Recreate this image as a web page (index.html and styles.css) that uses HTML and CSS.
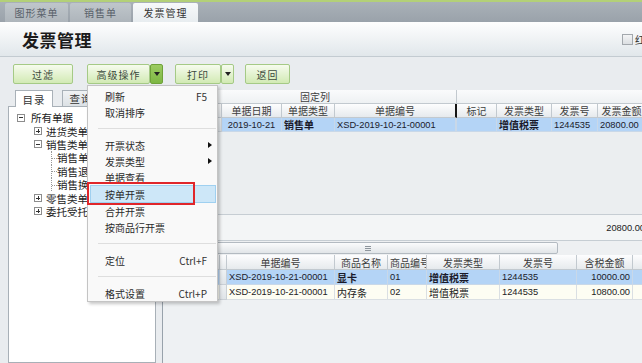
FILE: index.html
```html
<!DOCTYPE html>
<html lang="zh-CN">
<head>
<meta charset="utf-8">
<title>发票管理</title>
<link rel="stylesheet" href="styles.css">
</head>
<body>
<div class="app">
  <div class="tabbar">
    <div class="tab t1">图形菜单</div>
    <div class="tab t2">销售单</div>
    <div class="tab t3 active">发票管理</div>
  </div>
  <div class="titlebar">
    <h1 class="title">发票管理</h1>
    <label class="chk"><span class="box"></span>红字发票</label>
  </div>
  <div class="toolbar">
    <button class="btn b-filter">过滤</button>
    <div class="split s-adv"><button class="btn b-adv">高级操作</button><button class="drop pressed"><i class="tri"></i></button></div>
    <div class="split s-print"><button class="btn b-print">打印</button><button class="drop"><i class="tri"></i></button></div>
    <button class="btn b-back">返回</button>
  </div>
  <div class="content">
    <div class="leftpanel">
      <div class="ltabs">
        <div class="ltab active">目录</div>
        <div class="ltab">查询</div>
      </div>
      <div class="tree">
        <div class="node l0"><span class="exp"></span>所有单据</div>
        <div class="node l1"><span class="exp plus"></span>进货类单据</div>
        <div class="node l1"><span class="exp"></span>销售类单据</div>
        <div class="node l2"><span class="dash"></span>销售单</div>
        <div class="node l2"><span class="dash"></span>销售退货单</div>
        <div class="node l2"><span class="dash"></span>销售换货单</div>
        <div class="node l1"><span class="exp plus"></span>零售类单据</div>
        <div class="node l1"><span class="exp plus"></span>委托受托单据</div>
      </div>
    </div>
    <div class="rightpanel">
      <div class="tgrid">
        <div class="c hd grp"></div>
        <div class="c hd grp s4">固定列</div>
        <div class="c hd grp s4 last"></div>

        <div class="c hd"></div>
        <div class="c hd">序号</div>
        <div class="c hd">单据日期</div>
        <div class="c hd">单据类型</div>
        <div class="c hd thick">单据编号</div>
        <div class="c hd">标记</div>
        <div class="c hd">发票类型</div>
        <div class="c hd">发票号</div>
        <div class="c hd">发票金额</div>

        <div class="c ind"></div>
        <div class="c ind"></div>
        <div class="c sel ctr"><span class="n">2019-10-21</span></div>
        <div class="c sel b">销售单</div>
        <div class="c sel thick"><span class="n">XSD-2019-10-21-00001</span></div>
        <div class="c sel"></div>
        <div class="c sel b">增值税票</div>
        <div class="c sel"><span class="n">1244535</span></div>
        <div class="c sel"><span class="n">20800.00</span></div>
      </div>
      <div class="gbody"></div>
      <div class="summary"><span class="n">20800.00</span></div>
      <div class="hscroll"><div class="thumb"><span class="grip"></span></div></div>
      <div class="bgrid">
        <div class="c hd"></div>
        <div class="c hd"></div>
        <div class="c hd">单据编号</div>
        <div class="c hd">商品名称</div>
        <div class="c hd lft">商品编号</div>
        <div class="c hd">发票类型</div>
        <div class="c hd">发票号</div>
        <div class="c hd">含税金额</div>
        <div class="c hd"></div>

        <div class="c sel"></div>
        <div class="c ind"></div>
        <div class="c sel"><span class="n">XSD-2019-10-21-00001</span></div>
        <div class="c sel b">显卡</div>
        <div class="c sel"><span class="n">01</span></div>
        <div class="c sel b">增值税票</div>
        <div class="c sel"><span class="n">1244535</span></div>
        <div class="c sel r"><span class="n">10000.00</span></div>
        <div class="c sel"></div>

        <div class="c alt"></div>
        <div class="c ind"></div>
        <div class="c alt"><span class="n">XSD-2019-10-21-00001</span></div>
        <div class="c alt">内存条</div>
        <div class="c alt"><span class="n">02</span></div>
        <div class="c alt">增值税票</div>
        <div class="c alt"><span class="n">1244535</span></div>
        <div class="c alt r"><span class="n">10800.00</span></div>
        <div class="c alt"></div>
      </div>
    </div>
  </div>

  <div class="menu">
    <div class="mi"><span>刷新</span><span class="sc">F5</span></div>
    <div class="mi"><span>取消排序</span></div>
    <div class="sep"></div>
    <div class="mi"><span>开票状态</span><i class="arrow"></i></div>
    <div class="mi"><span>发票类型</span><i class="arrow"></i></div>
    <div class="mi"><span>单据查看</span></div>
    <div class="mi hl"><span>按单开票</span></div>
    <div class="mi"><span>合并开票</span></div>
    <div class="mi"><span>按商品行开票</span></div>
    <div class="sep"></div>
    <div class="mi"><span>定位</span><span class="sc">Ctrl+F</span></div>
    <div class="sep"></div>
    <div class="mi"><span>格式设置</span><span class="sc">Ctrl+P</span></div>
  </div>
  <div class="redbox"></div>
</div>
</body>
</html>
```

FILE: styles.css
```css
* { box-sizing: border-box; margin: 0; padding: 0; }
html, body { width: 642px; height: 363px; overflow: hidden; }
body {
  font-family: "Noto Sans CJK SC", "Noto Sans", sans-serif;
  font-size: 10px;
  color: #222;
  background: #e9ecef;
}
.app { position: relative; width: 642px; height: 363px; display: flex; flex-direction: column; overflow: hidden; }

/* top tab strip */
.tabbar {
  height: 22px; flex: none; display: flex; align-items: flex-end; gap: 2px;
  padding-left: 5px;
  background: linear-gradient(#a9b1b8, #9aa2aa);
  border-top: 2px solid #b3d078;
}
.tab {
  height: 19px; display: flex; align-items: center; justify-content: center;
  background: linear-gradient(#bfc6cb, #aeb5bb);
  color: #59616a; font-size: 10px; letter-spacing: 1px;
  border-radius: 2px 2px 0 0;
}
.t1 { width: 63px; }
.t2 { width: 61px; }
.t3 { width: 65px; }
.tab.active { background: linear-gradient(#f7f9fa, #e8edf0); color: #333; }

/* title */
.titlebar {
  height: 35px; flex: none; display: flex; align-items: center; padding-left: 22px;
  background: linear-gradient(#fefefe, #e1e7eb);
  border-bottom: 1px solid #c3cbd1;
}
.title { flex: 1; font-size: 17px; font-weight: bold; color: #1c1c1c; letter-spacing: 0.5px; }
.chk { width: 20px; display: flex; align-items: center; gap: 2px; overflow: hidden; white-space: nowrap; font-size: 10px; color: #333; }
.box { width: 11px; height: 11px; flex: none; border: 1px solid #a3a8ad; background: linear-gradient(#f3f4f5, #dcdfe2); }

/* toolbar */
.toolbar { height: 33px; flex: none; display: flex; align-items: flex-start; padding: 7px 0 0 13px; }
.btn, .drop {
  height: 20px; border: 1px solid #a5ca86; border-radius: 2px;
  background: linear-gradient(#f6fbee, #d2eab4);
  font-family: "Noto Sans CJK SC", sans-serif; font-size: 10px; letter-spacing: 1px; color: #3b4a3c;
  display: flex; align-items: center; justify-content: center;
}
.split { display: flex; }
.b-filter { width: 60px; }
.s-adv { margin-left: 14px; }
.b-adv { width: 63px; }
.s-print { margin-left: 12px; }
.b-print { width: 46px; }
.b-back { width: 45px; margin-left: 11px; }
.drop { width: 13px; letter-spacing: 0; }
.drop.pressed { background: linear-gradient(#9ccb62, #7db743); border-color: #6fa23a; }
.tri { width: 0; height: 0; border-top: 4px solid #222; border-left: 3px solid transparent; border-right: 3px solid transparent; }

/* content */
.content { flex: 1; display: flex; min-height: 0; }
.leftpanel { width: 148px; flex: none; margin-left: 8px; display: flex; flex-direction: column; }
.ltabs { height: 16px; flex: none; display: flex; align-items: flex-end; padding-left: 7px; gap: 9px; }
.ltab {
  height: 16px; width: 38px; border: 1px solid #a9b1b8; border-bottom: none;
  background: linear-gradient(#f0f2f4, #dce1e5);
  display: flex; align-items: center; justify-content: center;
  font-size: 10.5px; letter-spacing: 1px; color: #333; position: relative;
}
.ltab.active { background: #fff; height: 17px; margin-bottom: -1px; z-index: 1; }
.tree { flex: 1; background: #fff; border: 1px solid #a8b0b7; padding-top: 4px; }
.node { height: 13.4px; display: flex; align-items: center; white-space: nowrap; font-size: 10.5px; color: #222; }
.l0 { padding-left: 8px; }
.l1 { padding-left: 25px; }
.l2 { padding-left: 42px; }
.exp { width: 8px; height: 8px; flex: none; border: 1px solid #8d8d8d; background: #fff; position: relative; margin-right: 6px; }
.l1 .exp { margin-right: 4px; }
.exp::before { content: ''; position: absolute; left: 1px; right: 1px; top: 2.5px; height: 1px; background: #333; }
.exp.plus::after { content: ''; position: absolute; top: 1px; bottom: 1px; left: 2.5px; width: 1px; background: #333; }
.dash { width: 6px; height: 100%; flex: none; border-left: 1px dotted #999; position: relative; }
.dash::after { content: ''; position: absolute; left: 0; top: 50%; width: 5px; border-top: 1px dotted #999; }

/* right panel */
.rightpanel { flex: 1; min-width: 0; margin-left: 6px; border-left: 1px solid #98a2ab; background: #eef1f3; display: flex; flex-direction: column; overflow: hidden; }
.tgrid { display: grid; grid-template-columns: 11px 48px 60px 53px 122px 40px 55px 46px 48px; grid-auto-rows: 14px; flex: none; }
.bgrid { display: grid; grid-template-columns: 57px 7px 108px 53px 39px 73px 77px 56px 60px; grid-auto-rows: 15px; flex: none; }
.c {
  border-right: 1px solid #cad0d6; border-bottom: 1px solid #cad0d6;
  display: flex; align-items: center; padding: 0 2px;
  overflow: hidden; white-space: nowrap; font-size: 10px; color: #222;
}
.hd { background: linear-gradient(#fdfdfe, #e6eaed); justify-content: center; color: #3d3d3d; border-color: #c2c9cf; }
.hd.lft { justify-content: flex-start; }
.grp { background: linear-gradient(#fafbfc, #eef1f3); }
.s4 { grid-column: span 4; }
.thick { border-right: 2px solid #151515; }
.sel { background: #b4d4f6; color: #1a1a2a; border-color: #c9d8e8; }
.alt { background: #fdfdf3; border-color: #dadfe3; }
.ind { background: linear-gradient(#eef1f3, #dfe4e8); }
.ctr { justify-content: center; }
.r { justify-content: flex-end; }
.b { font-weight: bold; }
.n { font-family: "Liberation Sans Narrow", "Liberation Sans", sans-serif; font-size: 9.3px; }

.gbody { height: 82px; flex: none; background: #ebeef0; }
.summary { height: 26px; flex: none; border-top: 1px solid #c6cdd3; background: #f3f5f6; display: flex; align-items: center; justify-content: flex-end; margin-right: -3px; }
.hscroll { height: 15px; flex: none; border-top: 1px solid #c6cdd3; background: #eef0f2; padding: 1px 0 0 15px; }
.thumb { width: 380px; height: 12px; border: 1px solid #b3bac1; border-radius: 2px; background: linear-gradient(#fafbfc, #e1e5e8); display: flex; align-items: center; justify-content: center; }
.grip { width: 6px; height: 5px; background: repeating-linear-gradient(#8d959c 0 1px, transparent 1px 2px); }

/* context menu */
.menu {
  position: absolute; left: 87px; top: 85px; width: 131px;
  background: #f9f9f9; border: 1px solid #c4c4c4;
  box-shadow: 2px 2px 3px rgba(0, 0, 0, 0.22);
  padding-top: 2px; display: flex; flex-direction: column; z-index: 5;
}
.mi {
  height: 16px; flex: none; display: flex; align-items: center; justify-content: space-between;
  padding: 0 10px 0 17px; font-size: 10px; color: #2a2a2a; white-space: nowrap;
}
.sc { font-size: 10px; color: #333; }
.mi.hl { height: 18px; margin: 0 1px 0 2px; padding-left: 14px; background: #cde7f8; border: 1px solid #9fd0f0; }
.sep { height: 17px; flex: none; display: flex; align-items: center; padding: 0 1px 0 10px; }
.sep::after { content: ''; flex: 1; height: 1px; background: #dedede; }
.arrow { width: 0; height: 0; border-left: 4px solid #111; border-top: 3.5px solid transparent; border-bottom: 3.5px solid transparent; margin-right: -5px; }
.redbox { position: absolute; left: 87px; top: 182px; width: 108px; height: 23px; border: 2px solid #e0262a; z-index: 6; }
```
